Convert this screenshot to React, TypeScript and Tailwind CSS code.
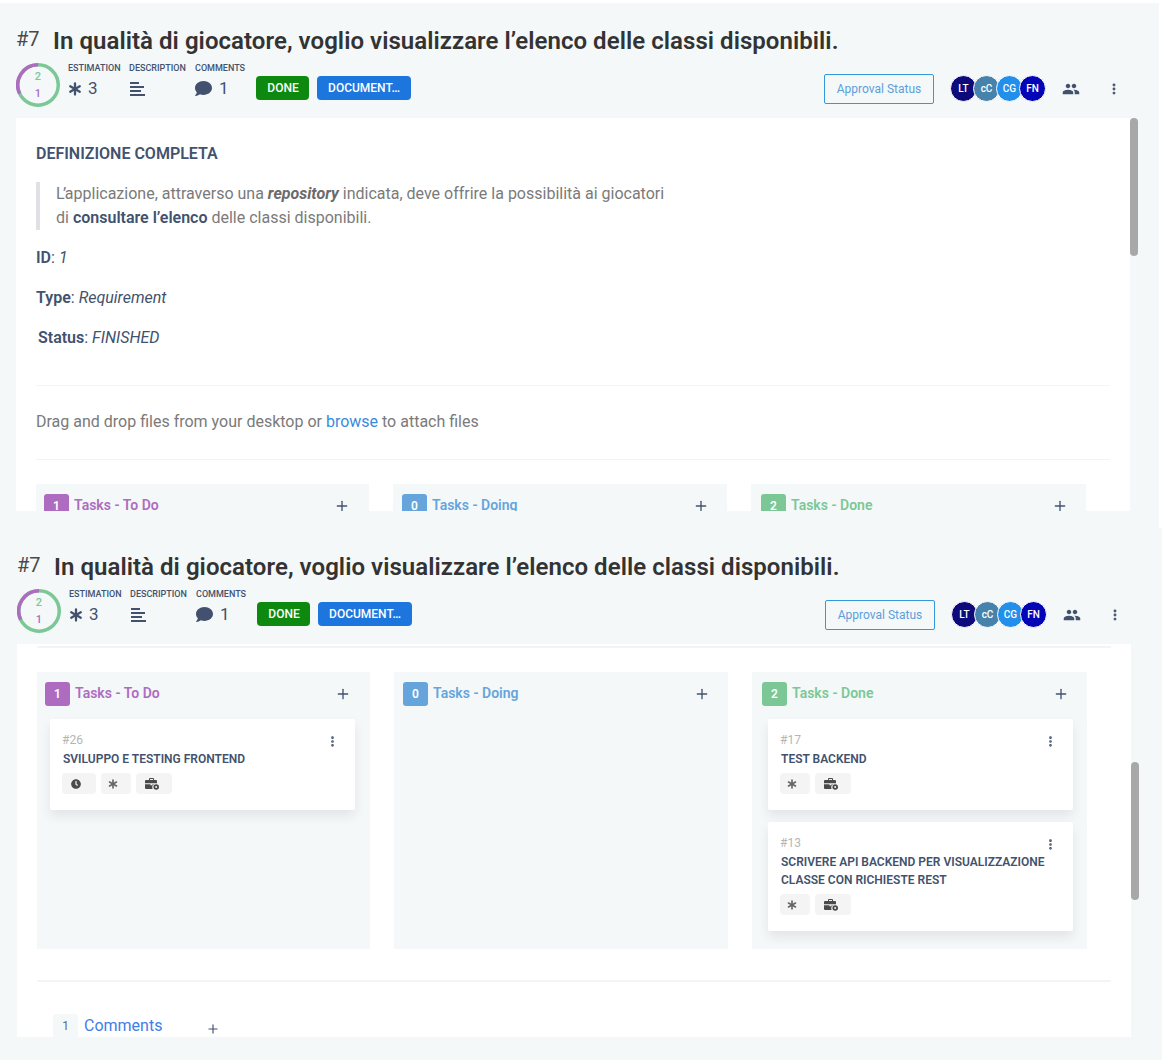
import { Plus, MoreVertical, Asterisk } from "lucide-react";
import { FaComment, FaClock } from "react-icons/fa";
import { MdPeople } from "react-icons/md";

function Avatars() {
  const people = [
    { label: "LT", bg: "bg-[#0d0a7c]" },
    { label: "cC", bg: "bg-[#4682ab]" },
    { label: "CG", bg: "bg-[#2290ea]" },
    { label: "FN", bg: "bg-[#0505b8]" },
  ];
  return (
    <div className="flex">
      {people.map((p, i) => (
        <div
          key={p.label}
          className={`${p.bg} ${i > 0 ? "-ml-[4px]" : ""} w-[27px] h-[27px] rounded-full border border-white flex items-center justify-center text-white text-[10px] font-medium`}
        >
          {p.label}
        </div>
      ))}
    </div>
  );
}

function DescriptionIcon() {
  return (
    <svg width="15" height="14" viewBox="0 0 15 14" fill="#42526e">
      <rect x="0" y="0" width="9" height="2" />
      <rect x="0" y="4" width="14" height="2" />
      <rect x="0" y="8" width="11" height="2" />
      <rect x="0" y="12" width="15" height="2" />
    </svg>
  );
}

function BriefcaseClock() {
  return (
    <svg width="14" height="12" viewBox="0 0 14 12" fill="#4a4a4a">
      <path d="M4 2V1a1 1 0 0 1 1-1h3a1 1 0 0 1 1 1v1h2a1 1 0 0 1 1 1v2.2H0V3a1 1 0 0 1 1-1h3zm1 0h3V1H5v1z" />
      <path d="M0 6.2h5.5v1h2v-1H9A4 4 0 0 0 7.6 11H1a1 1 0 0 1-1-1V6.2z" />
      <circle cx="11.2" cy="9" r="2.8" />
      <circle cx="11.2" cy="9" r="1" fill="#f4f4f4" />
    </svg>
  );
}

function Header() {
  return (
    <div>
      <div className="flex items-start h-[48px] pl-[16px] pt-[23px]">
        <span className="text-[20px] leading-[26px] text-[#4a4a4a] w-[37px]">#7</span>
        <h1 className="text-[24px] leading-[30px] font-semibold tracking-[0.05px] text-[#333] whitespace-nowrap">
          In qualità di giocatore, voglio visualizzare l’elenco delle classi disponibili.
        </h1>
      </div>
      <div className="flex items-center h-[67px] pl-[16px] pr-[38px]">
        <svg width="44" height="44" viewBox="0 0 44 44" className="shrink-0">
          <circle cx="22" cy="22" r="20.25" fill="none" stroke="#7bc896" strokeWidth="3.5" />
          <path d="M22 1.75 A20.25 20.25 0 0 0 3.7 30.7" fill="none" stroke="#ae6cc0" strokeWidth="3.5" />
          <text x="22" y="17" textAnchor="middle" fontSize="11" fontWeight="500" fill="#7bc896">2</text>
          <text x="22" y="34" textAnchor="middle" fontSize="11" fontWeight="500" fill="#ae6cc0">1</text>
        </svg>
        <div className="ml-[8px] w-[61px] -mt-[6px]">
          <div className="text-[9px] leading-[12px] text-[#42526e] font-medium">ESTIMATION</div>
          <div className="flex items-center h-[28px] pt-[2px] text-[#42526e]">
            <Asterisk size={22} strokeWidth={2.5} className="-ml-[4px]" />
            <span className="ml-[2px] text-[17px]">3</span>
          </div>
        </div>
        <div className="w-[66px] -mt-[6px]">
          <div className="text-[9px] leading-[12px] text-[#42526e] font-medium">DESCRIPTION</div>
          <div className="flex items-center h-[28px] pt-[2px] pl-[1px]">
            <DescriptionIcon />
          </div>
        </div>
        <div className="w-[61px] -mt-[6px]">
          <div className="text-[9px] leading-[12px] text-[#42526e] font-medium">COMMENTS</div>
          <div className="flex items-center h-[28px] pt-[2px] text-[#42526e]">
            <FaComment size={17} />
            <span className="ml-[7px] text-[17px]">1</span>
          </div>
        </div>
        <span className="mt-[7px] w-[53px] h-[24px] pl-[1px] rounded-[4px] bg-[#0d890f] text-white text-[12px] font-medium flex items-center justify-center">
          DONE
        </span>
        <span className="mt-[7px] ml-[8px] w-[94px] h-[24px] rounded-[4px] bg-[#1d76dd] text-white text-[12px] font-medium flex items-center justify-center">
          DOCUMENT…
        </span>
        <div className="flex-1" />
        <button className="mt-[8px] w-[110px] h-[30px] border border-[#3498db] rounded-[2px] text-[12px] text-[#5b9fdb]">
          Approval Status
        </button>
        <div className="mt-[8px] ml-[16px]">
          <Avatars />
        </div>
        <MdPeople size={18} className="mt-[8px] ml-[16px] text-[#42526e]" />
        <MoreVertical size={14} strokeWidth={3} className="mt-[8px] ml-[27px] text-[#42526e]" />
      </div>
    </div>
  );
}

function Chip({ width, children }: { width: string; children: React.ReactNode }) {
  return (
    <span className={`${width} h-[21px] rounded-[4px] bg-[#f4f4f4] flex items-center pl-[9px] text-[#4a4a4a]`}>
      {children}
    </span>
  );
}

function TaskCard({ id, title, clock }: { id: string; title: string[]; clock?: boolean }) {
  return (
    <div className="w-[305px] bg-white rounded-[2px] shadow-[0_6px_12px_rgba(0,0,0,0.08)] pl-[13px] pr-[13px] pt-[13px] pb-[16px] relative">
      <div className="text-[12px] leading-[16px] text-[#b5b5b5] -ml-[1px]">{id}</div>
      <div className="text-[12px] leading-[18px] font-semibold text-[#42526e] mt-[2px]">
        {title.map((t) => (
          <div key={t}>{t}</div>
        ))}
      </div>
      <div className="flex gap-[5px] mt-[5px] -ml-[1px]">
        {clock && (
          <Chip width="w-[34px]">
            <FaClock size={10} />
          </Chip>
        )}
        <Chip width="w-[30px]">
          <Asterisk size={16} strokeWidth={2.5} className="-ml-[5px] text-[#666]" />
        </Chip>
        <Chip width="w-[36px]">
          <BriefcaseClock />
        </Chip>
      </div>
      <MoreVertical size={13} strokeWidth={3} className="absolute top-[16px] right-[16px] text-[#42526e]" />
    </div>
  );
}

function TaskColumn({
  count,
  title,
  badge,
  text,
  className,
  headPad,
  cardPad,
  children,
}: {
  count: number;
  title: string;
  badge: string;
  text: string;
  className: string;
  headPad: string;
  cardPad?: string;
  children?: React.ReactNode;
}) {
  return (
    <div className={`${className} bg-[#f4f8f9] h-[277px] shrink-0`}>
      <div className={`${headPad} flex items-start h-[47px] pt-[10px]`}>
        <span className={`${badge} w-[25px] h-[24px] rounded-[3px] text-white text-[12px] font-semibold flex items-center justify-center`}>
          {count}
        </span>
        <span className={`${text} ml-[5px] text-[14px] leading-[22px] font-semibold`}>{title}</span>
        <div className="flex-1" />
        <Plus size={16} strokeWidth={2} className="mt-[4px] text-[#42526e]" />
      </div>
      {children && <div className={`${cardPad} flex flex-col gap-[12px]`}>{children}</div>}
    </div>
  );
}

function Columns() {
  return (
    <div className="flex">
      <TaskColumn className="w-[333px]" headPad="pl-[8px] pr-[19px]" cardPad="pl-[13px]" count={1} title="Tasks - To Do" badge="bg-[#ae6cc0]" text="text-[#ae6cc0]">
        <TaskCard id="#26" title={["SVILUPPO E TESTING FRONTEND"]} clock />
      </TaskColumn>
      <TaskColumn className="w-[334px] ml-[24px]" headPad="pl-[9px] pr-[18px]" count={0} title="Tasks - Doing" badge="bg-[#65a5dc]" text="text-[#65a5dc]" />
      <TaskColumn className="w-[335px] ml-[24px]" headPad="pl-[10px] pr-[18px]" cardPad="pl-[16px]" count={2} title="Tasks - Done" badge="bg-[#7bc896]" text="text-[#7bc896]">
        <TaskCard id="#17" title={["TEST BACKEND"]} />
        <TaskCard id="#13" title={["SCRIVERE API BACKEND PER VISUALIZZAZIONE", "CLASSE CON RICHIESTE REST"]} />
      </TaskColumn>
    </div>
  );
}

function Scrollbar({ offset }: { offset: string }) {
  return (
    <div className={`${offset} w-[8px] h-[138px] rounded-[4px] bg-[#a8a8a8] shrink-0`} />
  );
}

function TopBody() {
  return (
    <div className="h-[393px] overflow-hidden flex-1 bg-white pl-[20px] pr-[20px]">
      <div className="pt-[24px] text-[16px] leading-[24px] font-semibold text-[#42526e]">DEFINIZIONE COMPLETA</div>
      <blockquote className="mt-[16px] border-l-[4px] border-[#dfe1e6] pl-[16px] text-[16px] leading-[24px] text-[#7a7a7a]">
        <span className="tracking-[-1.5px]">L’</span>applicazione, attraverso una <b className="italic font-bold text-[#6b6b6b]">repository</b> indicata, deve offrire la possibilità ai giocatori
        <br />
        di <b className="font-semibold text-[#42526e]">consultare l’elenco</b> delle classi disponibili.
      </blockquote>
      <p className="mt-[16px] text-[16px] leading-[24px] text-[#42526e]">
        <b className="font-semibold">ID</b>: <i>1</i>
      </p>
      <p className="mt-[16px] text-[16px] leading-[24px] text-[#42526e]">
        <b className="font-semibold">Type</b>: <i>Requirement</i>
      </p>
      <p className="mt-[16px] pl-[2px] text-[16px] leading-[24px] text-[#42526e]">
        <b className="font-semibold">Status</b>: <i>FINISHED</i>
      </p>
      <div className="mt-[35px] border-t border-[#f2f4f5]" />
      <p className="mt-[24px] text-[16px] leading-[24px] text-[#7a7a7a]">
        Drag and drop files from your desktop or <span className="text-[#3b8bdc]">browse</span> to attach files
      </p>
      <div className="mt-[25px] border-t border-[#f2f4f5]" />
      <div className="mt-[24px]">
        <Columns />
      </div>
    </div>
  );
}

function BottomBody() {
  return (
    <div className="h-[393px] overflow-hidden flex-1 bg-white pl-[20px] pr-[20px]">
      <div className="mt-[2px] border-t-[2px] border-[#f2f4f5]" />
      <div className="mt-[24px]">
        <Columns />
      </div>
      <div className="mt-[31px] border-t-[2px] border-[#f2f4f5]" />
      <div className="mt-[32px] flex pl-[16px]">
        <span className="w-[25px] h-[24px] rounded-[3px] bg-[#f4f8f9] text-[12px] text-[#5c6b7a] flex items-center justify-center">1</span>
        <span className="ml-[6px] text-[16px] leading-[24px] text-[#3f7de8]">Comments</span>
        <Plus size={14} strokeWidth={2} className="ml-[44px] mt-[8px] text-[#42526e]" />
      </div>
    </div>
  );
}

export default function App() {
  return (
    <div className="w-[1162px] h-[1060px] overflow-hidden bg-white font-['Roboto',sans-serif]">
      <div className="h-[3px]" />
      <div className="w-[1159px] h-[525px] bg-[#f4f8f9]">
        <Header />
        <div className="flex pl-[16px] pr-[21px]">
          <TopBody />
          <Scrollbar offset="mt-0" />
        </div>
      </div>
      <div className="h-[532px] bg-[#f4f8f9] pl-[1px] pt-[1px]">
        <div className="w-[1159px]">
          <Header />
          <div className="flex pl-[16px] pr-[21px]">
            <BottomBody />
            <Scrollbar offset="mt-[118px]" />
          </div>
        </div>
      </div>
    </div>
  );
}
